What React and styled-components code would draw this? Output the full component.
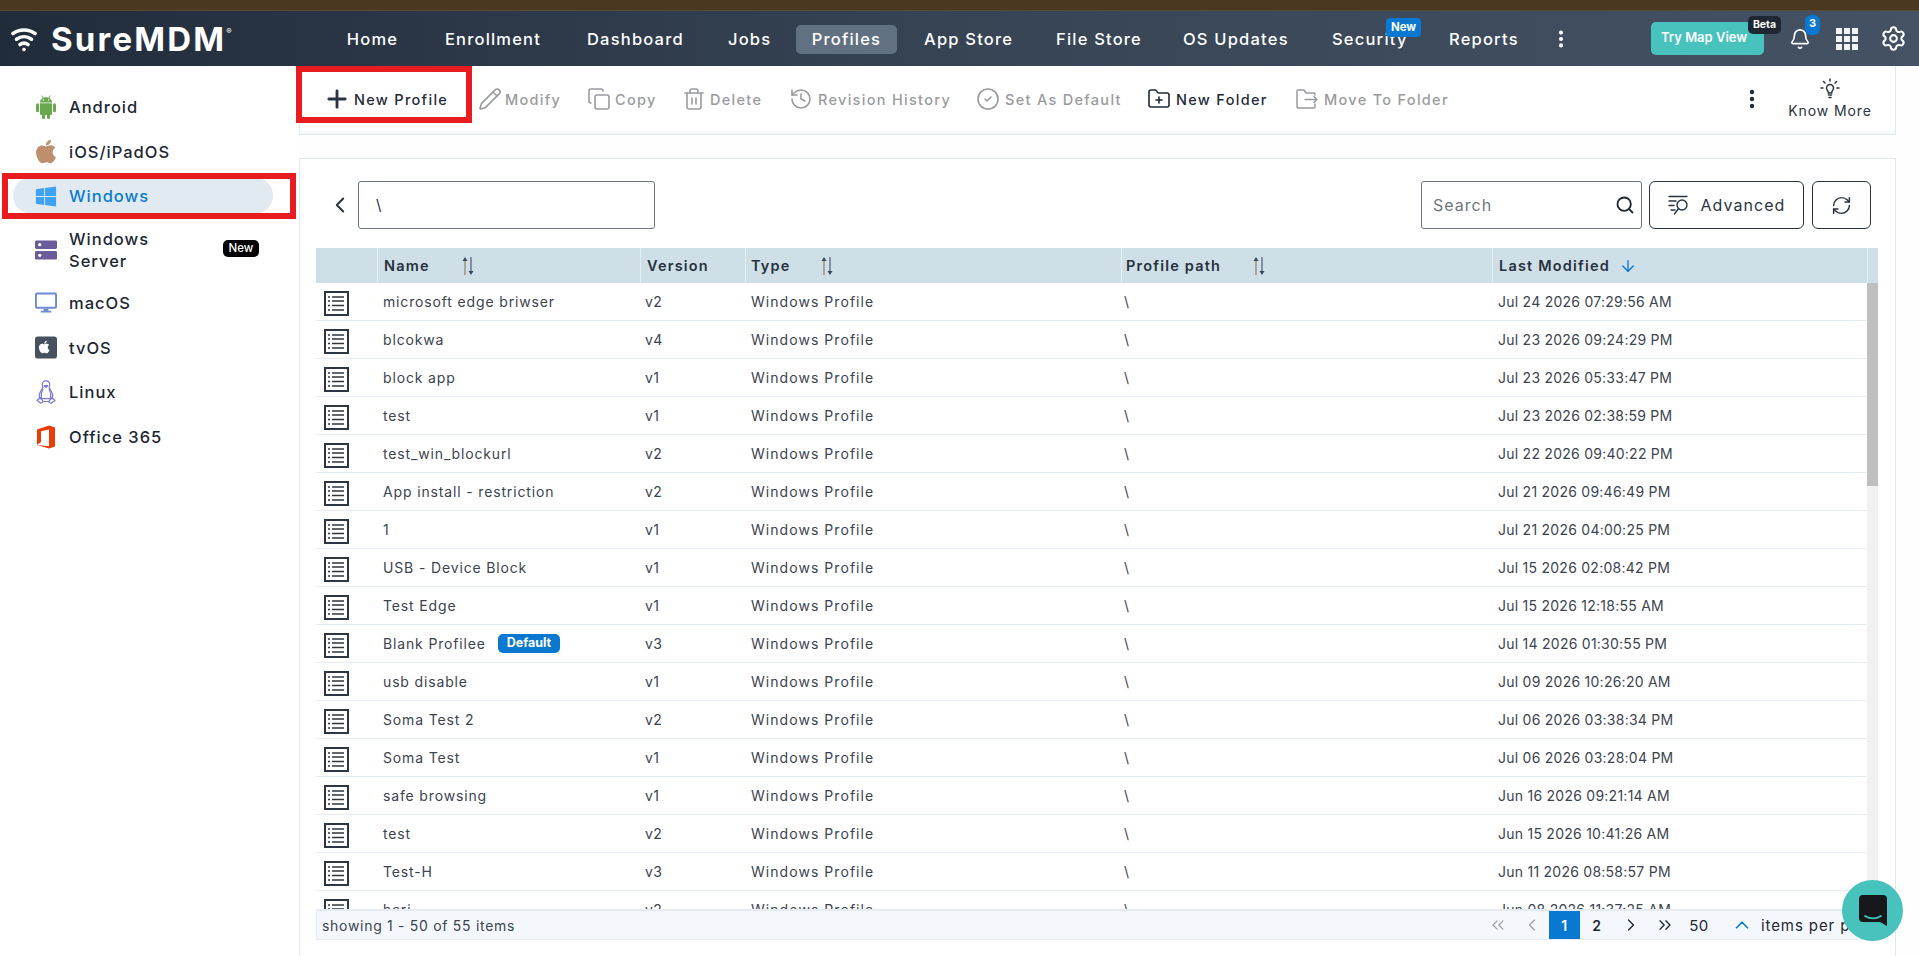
import React from 'react';
import styled, { createGlobalStyle } from 'styled-components';
import { FaApple, FaWindows } from 'react-icons/fa';
import {
  Plus, Pencil, Copy, Trash2, History, CircleCheck, FolderPlus,
  EllipsisVertical, ChevronLeft, ChevronRight, ChevronUp, ChevronsLeft, ChevronsRight,
  Search, RefreshCw, Bell, Settings, ArrowDown
} from 'lucide-react';

const FONT = 'Inter, "Noto Sans", sans-serif';

const rows = [
  ['microsoft edge briwser', 'v2', 'Jul 24 2026 07:29:56 AM'],
  ['blcokwa', 'v4', 'Jul 23 2026 09:24:29 PM'],
  ['block app', 'v1', 'Jul 23 2026 05:33:47 PM'],
  ['test', 'v1', 'Jul 23 2026 02:38:59 PM'],
  ['test_win_blockurl', 'v2', 'Jul 22 2026 09:40:22 PM'],
  ['App install - restriction', 'v2', 'Jul 21 2026 09:46:49 PM'],
  ['1', 'v1', 'Jul 21 2026 04:00:25 PM'],
  ['USB - Device Block', 'v1', 'Jul 15 2026 02:08:42 PM'],
  ['Test Edge', 'v1', 'Jul 15 2026 12:18:55 AM'],
  ['Blank Profilee', 'v3', 'Jul 14 2026 01:30:55 PM', true],
  ['usb disable', 'v1', 'Jul 09 2026 10:26:20 AM'],
  ['Soma Test 2', 'v2', 'Jul 06 2026 03:38:34 PM'],
  ['Soma Test', 'v1', 'Jul 06 2026 03:28:04 PM'],
  ['safe browsing', 'v1', 'Jun 16 2026 09:21:14 AM'],
  ['test', 'v2', 'Jun 15 2026 10:41:26 AM'],
  ['Test-H', 'v3', 'Jun 11 2026 08:58:57 PM'],
  ['hari', 'v2', 'Jun 08 2026 11:37:25 AM']
];

const navItems = [
  ['Home', 53], ['Enrollment', 98], ['Dashboard', 96], ['Jobs', 42], ['Profiles', 101],
  ['App Store', 87], ['File Store', 82], ['OS Updates', 104], ['Security', 72], ['Reports', 69]
];

const GlobalStyle = createGlobalStyle`
  html, body { margin: 0; padding: 0; height: 100%; overflow: hidden; background: #fff; }
  body { font-family: ${FONT}; color: #1f2a37; }
  * { box-sizing: border-box; }
`;

const Page = styled.div`
  display: flex;
  flex-direction: column;
  height: 956px;
  overflow: hidden;
`;

const BrownStrip = styled.div`
  height: 11px;
  background: #4b3820;
  border-bottom: 1px solid #5a4a34;
  flex: none;
`;

const Header = styled.header`
  flex: none;
  height: 55px;
  display: flex;
  align-items: center;
  background: linear-gradient(90deg, #212c3b 0%, #374454 50%, #445264 100%);
  color: #fff;
  position: relative;
`;

const Logo = styled.div`
  width: 346px;
  padding-left: 11px;
  display: flex;
  align-items: center;
  gap: 14px;
  font-size: 33px;
  font-weight: 700;
  letter-spacing: 2.2px;
  flex: none;
  sup { font-size: 8px; margin: -16px 0 0 0; letter-spacing: 0; font-weight: 500; }
`;

const LogoText = styled.div`
  display: flex;
  align-items: center;
`;

const Nav = styled.nav`
  display: flex;
  align-items: center;
  margin-top: 1px;
`;

const NavItem = styled.div`
  position: relative;
  width: ${p => p.$w}px;
  margin-right: ${p => p.$gap}px;
  height: 29px;
  line-height: 29px;
  text-align: center;
  font-size: 16.5px;
  font-weight: 500;
  letter-spacing: 1.2px;
  white-space: nowrap;
  border-radius: 5px;
  background: ${p => (p.$active ? '#617182' : 'transparent')};
`;

const NewTag = styled.span`
  position: absolute;
  top: -7px;
  left: 54px;
  width: 35px;
  height: 19px;
  line-height: 18px;
  border-radius: 4px;
  background: #0878d0;
  color: #fff;
  font-size: 11.5px;
  font-weight: 700;
  letter-spacing: 0;
`;

const HeaderRight = styled.div`
  position: absolute;
  left: 1552px;
  right: 0;
  top: 0;
  bottom: 0;
  display: flex;
  align-items: center;
`;

const MapButton = styled.div`
  position: relative;
  width: 113px;
  height: 33px;
  margin: -1px 0 0 79px;
  border-radius: 5px;
  background: #48c2bd;
  color: #fff;
  font-size: 13px;
  font-weight: 600;
  padding-left: 10px;
  line-height: 31px;
`;

const BetaTag = styled.span`
  position: absolute;
  top: -6px;
  right: -17px;
  width: 33px;
  height: 18px;
  line-height: 18px;
  border-radius: 5px;
  background: #1e2732;
  font-size: 10.5px;
  font-weight: 700;
  text-align: center;
`;

const BellBox = styled.div`
  position: relative;
  margin-left: 25px;
  width: 22px;
  height: 26px;
  display: flex;
  align-items: center;
  justify-content: center;
`;

const BellCount = styled.span`
  position: absolute;
  top: -11px;
  right: -9px;
  width: 15px;
  height: 20px;
  border-radius: 6px;
  background: #0878d0;
  font-size: 11px;
  font-weight: 700;
  text-align: center;
  line-height: 17px;
`;

const AppsGrid = styled.div`
  margin-left: 25px;
  width: 22px;
  height: 22px;
  display: grid;
  grid-template-columns: repeat(3, 6px);
  grid-auto-rows: 6px;
  gap: 2px;
  i { background: #f1f3f5; display: block; }
`;

const GearBox = styled.div`
  margin-left: 22px;
  display: flex;
`;

const Body = styled.div`
  flex: 1;
  display: flex;
  min-height: 0;
  background: #fefefe;
`;

const Sidebar = styled.aside`
  position: relative;
  width: 299px;
  flex: none;
  background: #fff;
  padding-top: 22px;
`;

const SideItem = styled.div`
  display: flex;
  align-items: center;
  height: ${p => (p.$tall ? 55 : 37)}px;
  margin: 0 26px 7.5px 13px;
  padding: 1px 0 0 22px;
  border-radius: 19px;
  background: ${p => (p.$active ? '#e1e9f1' : 'transparent')};
  color: ${p => (p.$active ? '#0a7bd2' : '#1d2733')};
  font-size: 16.5px;
  font-weight: 500;
  letter-spacing: 1px;
  line-height: 22px;
  position: relative;
`;

const SideIcon = styled.span`
  width: 22px;
  height: 24px;
  margin-right: 12px;
  display: flex;
  align-items: center;
  justify-content: center;
  flex: none;
`;

const SideLabel = styled.span`
  width: ${p => (p.$tall ? '96px' : 'auto')};
`;

const ServerTag = styled.span`
  position: absolute;
  left: 210px;
  top: 18px;
  width: 36px;
  height: 17px;
  line-height: 16px;
  text-align: center;
  border-radius: 5px;
  background: #000;
  color: #fff;
  font-size: 11.5px;
  letter-spacing: 0;
`;

const RedBox = styled.div`
  position: absolute;
  border: 6px solid #e81c1e;
  pointer-events: none;
  z-index: 5;
`;

const SideMark = styled(RedBox)`
  left: 2px;
  top: 107px;
  width: 294px;
  height: 46px;
`;

const ToolMark = styled(RedBox)`
  left: -4px;
  top: 0;
  width: 176px;
  height: 57px;
`;

const Main = styled.main`
  flex: 1;
  min-width: 0;
  display: flex;
  flex-direction: column;
  position: relative;
  padding-right: 23px;
`;

const Toolbar = styled.div`
  position: relative;
  height: 69px;
  background: #fff;
  border: 1px solid #e0e8f0;
  border-top: 0;
  box-shadow: inset 0 -5px 6px -5px #e8edf3;
  flex: none;
`;

const ToolItem = styled.div`
  position: absolute;
  left: ${p => p.$x}px;
  top: 21px;
  display: flex;
  align-items: center;
  height: 24px;
  color: ${p => (p.$on ? '#1f2a37' : '#999b9e')};
  font-size: 14.5px;
  font-weight: 500;
  letter-spacing: 1.3px;
  white-space: nowrap;
  svg { position: absolute; left: ${p => p.$ix}px; }
`;

const KnowMore = styled.div`
  position: absolute;
  left: 1487px;
  top: 12px;
  width: 86px;
  text-align: center;
  font-size: 14px;
  letter-spacing: .9px;
  color: #2a3441;
  svg { display: block; margin: 0 auto 3px; }
`;

const Card = styled.section`
  flex: 1;
  min-height: 0;
  margin-top: 23px;
  background: #fff;
  border: 1px solid #e0e8f0;
  border-bottom: 0;
  padding: 0 17px 16px 16px;
  display: flex;
  flex-direction: column;
`;

const FilterRow = styled.div`
  height: 89px;
  padding-top: 22px;
  display: flex;
  align-items: flex-start;
  flex: none;
  padding-right: 7px;
`;

const BackBtn = styled.div`
  width: 42px;
  height: 48px;
  display: flex;
  align-items: center;
  justify-content: flex-end;
  padding-right: 5px;
  color: #2a3441;
`;

const PathBox = styled.div`
  width: 297px;
  height: 48px;
  border: 1px solid #6c7680;
  border-radius: 3px;
  padding-left: 17px;
  line-height: 46px;
  font-size: 15px;
  color: #2a3441;
`;

const SearchBox = styled.div`
  margin-left: auto;
  width: 221px;
  height: 48px;
  border: 1px solid #6c7680;
  border-radius: 3px;
  padding: 0 6px 0 11px;
  display: flex;
  align-items: center;
  justify-content: space-between;
  color: #6f7780;
  font-size: 16px;
  letter-spacing: 1px;
  svg { color: #1d2733; }
`;

const OutlineBtn = styled.div`
  width: ${p => p.$w}px;
  height: 48px;
  margin-left: ${p => p.$ml}px;
  border: 1px solid #2a3441;
  border-radius: 6px;
  display: flex;
  align-items: center;
  justify-content: center;
  gap: 11px;
  font-size: 16px;
  letter-spacing: 1.05px;
  color: #2a3441;
`;

const HeadRow = styled.div`
  display: grid;
  grid-template-columns: 61px 263px 105px 376px 371px 375px 11px;
  height: 35px;
  background: #cfdfe8;
  flex: none;
`;

const HeadCell = styled.div`
  display: flex;
  align-items: center;
  padding-left: ${p => p.$pad || 6}px;
  border-left: ${p => (p.$first ? '0' : '1px solid #e6eef3')};
  font-size: 14.5px;
  font-weight: 600;
  letter-spacing: 1.2px;
  color: #27313d;
  white-space: nowrap;
`;

const SortWrap = styled.span`
  display: flex;
  margin-left: ${p => p.$ml}px;
`;

const TableBody = styled.div`
  flex: 1;
  min-height: 0;
  display: flex;
`;

const RowList = styled.div`
  flex: 1;
  min-width: 0;
  overflow: hidden;
`;

const ScrollRail = styled.div`
  width: 11px;
  flex: none;
  background: #f1f1f1;
`;

const ScrollThumb = styled.div`
  height: 203px;
  background: #bfbfbf;
`;

const Row = styled.div`
  display: grid;
  grid-template-columns: 61px 263px 105px 376px 371px 375px;
  height: 38px;
  border-bottom: 1.5px solid #e4ebf2;
  align-items: center;
  font-size: 14px;
  color: #3b444f;
  white-space: nowrap;
`;

const IconCell = styled.div`
  padding: 3px 0 0 8px;
  display: flex;
`;

const Cell = styled.div`
  padding-left: ${p => p.$pad}px;
  display: flex;
  align-items: center;
  letter-spacing: ${p => p.$ls}px;
`;

const DefaultTag = styled.span`
  margin-left: 12px;
  width: 62px;
  height: 19px;
  line-height: 18px;
  border-radius: 5px;
  background: #0878d0;
  color: #fff;
  font-size: 12.5px;
  font-weight: 700;
  letter-spacing: 0;
  text-align: center;
`;

const Footer = styled.div`
  flex: none;
  height: 31px;
  background: #f4f8fc;
  border: 1px solid #e4ebf2;
  border-top: 2px solid #e4ebf2;
  display: flex;
  align-items: center;
  justify-content: space-between;
  padding-left: 5px;
  font-size: 14px;
  letter-spacing: .7px;
  color: #3b444f;
  overflow: hidden;
  white-space: nowrap;
`;

const Pager = styled.div`
  display: flex;
  align-items: center;
  height: 100%;
  width: 396px;
  flex: none;
  svg { flex: none; }
`;

const PageBtn = styled.div`
  width: ${p => p.$w || 34}px;
  height: 29px;
  display: flex;
  align-items: center;
  justify-content: center;
  flex: none;
  color: ${p => (p.$muted ? '#9a9da1' : '#1d2733')};
  background: ${p => (p.$active ? '#0878d0' : 'transparent')};
  font-size: 14px;
  font-weight: 600;
  ${p => p.$active && 'color: #fff;'}
`;

const PerPage = styled.span`
  margin-left: 8px;
  font-size: 15px;
  letter-spacing: .9px;
  color: #1d2733;
`;

const PageSize = styled.span`
  width: 34px;
  margin-right: 15px;
  text-align: center;
  font-size: 15px;
  letter-spacing: .5px;
  color: #1d2733;
  flex: none;
`;

const ChatBubble = styled.div`
  position: absolute;
  right: 16px;
  bottom: 15px;
  width: 61px;
  height: 61px;
  border-radius: 50%;
  background: #48c2bd;
  display: flex;
  align-items: center;
  justify-content: center;
  z-index: 6;
`;

const WifiLogo = () => (
  <svg width="26" height="26" viewBox="0 0 26 26" fill="none" stroke="#fff" strokeWidth="3.6" strokeLinecap="round">
    <path d="M2 7.500C8.500 2.800 17.500 2.800 24 7.500" />
    <path d="M5.500 13.200C10 10 16 10 20.500 13.200" />
    <path d="M9 18.500c2.500-1.700 5.500-1.700 8 0" />
    <circle cx="13" cy="23.500" r="1.400" fill="#fff" strokeWidth="1" />
  </svg>
);

const ListIcon = () => (
  <svg width="25" height="25" viewBox="0 0 25 25" fill="none" stroke="#2d3743">
    <rect x="1" y="1" width="23" height="23" strokeWidth="2" />
    <path d="M8 6h12M8 10h12M8 14.500h12M8 19h12" strokeWidth="1.600" />
    <path d="M4 6h2M4 10h2M4 14.500h2M4 19h2" strokeWidth="1.600" />
  </svg>
);

const SortIcon = () => (
  <svg width="14" height="20" viewBox="0 0 14 20">
    <path d="M4 19V3" stroke="#8a7f6c" strokeWidth="1.200" />
    <path d="M1.500 5L4 1l2.500 4z" fill="#38495a" />
    <path d="M10 1v16" stroke="#4b5d70" strokeWidth="1.200" />
    <path d="M7.500 15l2.500 4 2.500-4z" fill="#38495a" />
  </svg>
);

const AndroidIcon = () => (
  <svg width="20" height="24" viewBox="0 0 20 24" fill="#6aa84f">
    <path d="M4 7.500C4 4.200 6.700 2.200 10 2.200s6 2 6 5.300z" />
    <path d="M5.500 .5l1.800 2.800M14.500 .5l-1.800 2.800" stroke="#6aa84f" strokeWidth=".9" />
    <circle cx="7.400" cy="5" r=".7" fill="#fff" />
    <circle cx="12.600" cy="5" r=".7" fill="#fff" />
    <path d="M4 8.300h12v10.400a1.300 1.300 0 0 1-1.300 1.300H5.300A1.300 1.300 0 0 1 4 18.700z" />
    <rect x="0" y="8.300" width="3" height="9" rx="1.500" />
    <rect x="17" y="8.300" width="3" height="9" rx="1.500" />
    <rect x="6" y="18" width="3" height="6" rx="1.500" />
    <rect x="11" y="18" width="3" height="6" rx="1.500" />
  </svg>
);

const ServerIcon = () => (
  <svg width="23" height="20" viewBox="0 0 23 20">
    <rect width="23" height="9" y="0" rx="1.500" fill="#6b5b9a" />
    <rect width="23" height="9" y="11" rx="1.500" fill="#6b5b9a" />
    <circle cx="5" cy="4.500" r="1.700" fill="#fff" />
    <circle cx="5" cy="15.500" r="1.700" fill="#fff" />
  </svg>
);

const MonitorIcon = () => (
  <svg width="23" height="22" viewBox="0 0 23 22">
    <rect x="1" y="1" width="21" height="15" rx="1" fill="#fff" stroke="#6d8bd0" strokeWidth="2" />
    <path d="M9 17h5v2h3v2H6v-2h3z" fill="#6d8bd0" />
  </svg>
);

const TvIcon = () => (
  <svg width="23" height="23" viewBox="0 0 23 23">
    <rect width="23" height="23" rx="3" fill="#47525e" />
    <g transform="translate(4 3.500) scale(0.0293)">
      <path fill="#fff" d="M318.700 268.700c-.2-36.700 16.400-64.400 50-84.800-18.800-26.900-47.200-41.700-84.700-44.600-35.500-2.800-74.300 20.700-88.500 20.700-15 0-49.400-19.700-76.400-19.700C63.300 141.200 4 184.800 4 273.500q0 39.300 14.400 81.200c12.800 36.700 59 126.700 107.200 125.200 25.200-.6 43-17.900 75.800-17.900 31.800 0 48.300 17.900 76.400 17.900 48.600-.7 90.400-82.500 102.600-119.300-65.200-30.700-61.700-90-61.700-91.900zm-56.600-164.200c27.300-32.400 24.800-61.900 24-72.500-24.100 1.400-52 16.400-67.900 34.900-17.500 19.800-27.800 44.300-25.600 71.900 26.100 2 49.900-11.400 69.500-34.300z" />
    </g>
  </svg>
);

const PenguinIcon = () => (
  <svg width="20" height="24" viewBox="0 0 20 24" fill="none" stroke="#7b78cf" strokeWidth="1.200" strokeLinejoin="round">
    <path d="M7 7.500C6.400 6.800 6.300 5.800 6.300 4.800 6.300 2.400 7.800 .8 10 .8s3.700 1.600 3.700 4c0 1 -.1 2 -.7 2.700 1.500 2.300 3.600 5 3.700 8.300 0 1 -.2 2 -.7 2.900H4c-.5-.9-.7-1.900-.7-2.900C3.400 12.500 5.500 9.800 7 7.500z" />
    <path d="M7 9c-.9 2.300-1.800 4.200-1.800 6.500 0 1 .2 2 .6 2.800M13 9c.9 2.300 1.800 4.200 1.800 6.500 0 1-.2 2-.6 2.800" />
    <path d="M1 20.500l3.300-3 3 4.200-2.300 1.500zM19 20.500l-3.300-3-3 4.200 2.300 1.500zM7.300 21.500h5.400" />
    <path d="M8.300 5.700L10 7.300l1.700-1.600z" fill="#7b78cf" />
  </svg>
);

const OfficeIcon = () => (
  <svg width="20" height="24" viewBox="0 0 20 24">
    <path fill="#e93c06" d="M1 4.500L13 .5l6 2v19l-6 2-12-3.500 12 1.300V4.500L5 6.200V17l-4 3z" />
  </svg>
);

const FilterSearchIcon = () => (
  <svg width="22" height="20" viewBox="0 0 22 20" fill="none" stroke="#2a3441" strokeWidth="1.400" strokeLinecap="round">
    <path d="M1 1.500h18M1 6h7M1 10.500h5M3 15h4" />
    <circle cx="14" cy="10" r="5" />
    <path d="M10.500 13.500L6.500 19" />
  </svg>
);

const MoveFolderIcon = ({ size }) => (
  <svg width={size} height={size} viewBox="0 0 24 24" fill="none" stroke="currentColor" strokeWidth="1.500" strokeLinejoin="round" strokeLinecap="round">
    <path d="M20 8V7a1 1 0 0 0-1-1h-8L9 3H3a1 1 0 0 0-1 1v16a1 1 0 0 0 1 1h16a1 1 0 0 0 1-1v-3" />
    <path d="M10 12.500h12M19 9.500l3 3-3 3" />
  </svg>
);

const BulbIcon = () => (
  <svg width="22" height="21" viewBox="0 0 22 21" fill="none" stroke="#2a3441" strokeWidth="1.500" strokeLinecap="round">
    <path d="M7.500 10a3.500 3.500 0 1 1 7 0c0 1.600-1 2.300-1.500 3.500-.2.500-.3 1-.3 1.500H9.300c0-.5-.1-1-.3-1.500-.5-1.200-1.500-1.900-1.500-3.500z" />
    <path d="M9.500 17h3M10 19.500h2M11 1v2M4.500 3.500L6 5M17.500 3.500L16 5M2 10h2M18 10h2" />
  </svg>
);

const ChatIcon = () => (
  <svg width="28" height="31" viewBox="0 0 28 31">
    <path fill="#17181c" d="M4 0h20a4 4 0 0 1 4 4v27l-7-4H4a4 4 0 0 1-4-4V4a4 4 0 0 1 4-4z" />
    <path d="M6 21c5 3 11 3 16 0" fill="none" stroke="#48c2bd" strokeWidth="1.800" strokeLinecap="round" />
  </svg>
);

const toolItems = [
  ['Modify', Pencil, 205, -27, false],
  ['Copy', Copy, 315, -28, false],
  ['Delete', Trash2, 410, -28, false],
  ['Revision History', History, 518, -29, false],
  ['Set As Default', CircleCheck, 705, -29, false],
  ['New Folder', FolderPlus, 876, -29, true],
  ['Move To Folder', MoveFolderIcon, 1024, -29, false]
];

const sideItems = [
  ['Android', <AndroidIcon />],
  ['iOS/iPadOS', <FaApple size={27} color="#bd8f6c" />],
  ['Windows', <FaWindows size={23} color="#3ea2f5" />, true],
  ['Windows Server', <ServerIcon />, false, true],
  ['macOS', <MonitorIcon />],
  ['tvOS', <TvIcon />],
  ['Linux', <PenguinIcon />],
  ['Office 365', <OfficeIcon />]
];

export default function App() {
  return (
    <Page>
      <GlobalStyle />
      <BrownStrip />
      <Header>
        <Logo>
          <WifiLogo />
          <LogoText>SureMDM<sup>®</sup></LogoText>
        </Logo>
        <Nav>
          {navItems.map(([label, w]) => (
            <NavItem key={label} $w={w} $gap={label === 'Profiles' ? 27 : label === 'Jobs' ? 26 : 45} $active={label === 'Profiles'}>
              {label}
              {label === 'Security' && <NewTag>New</NewTag>}
            </NavItem>
          ))}
        </Nav>
        <HeaderRight>
          <EllipsisVertical size={22} strokeWidth={2.5} style={{ marginLeft: -2 }} />
          <MapButton>Try Map View<BetaTag>Beta</BetaTag></MapButton>
          <BellBox>
            <Bell size={22} strokeWidth={1.8} />
            <BellCount>3</BellCount>
          </BellBox>
          <AppsGrid>
            {Array.from({ length: 9 }, (_, i) => <i key={i} />)}
          </AppsGrid>
          <GearBox><Settings size={27} strokeWidth={1.8} /></GearBox>
        </HeaderRight>
      </Header>
      <Body>
        <Sidebar>
          {sideItems.map(([label, icon, active, tall]) => (
            <SideItem key={label} $active={active} $tall={tall}>
              <SideIcon>{icon}</SideIcon>
              <SideLabel $tall={tall}>{label}</SideLabel>
              {tall && <ServerTag>New</ServerTag>}
            </SideItem>
          ))}
          <SideMark />
        </Sidebar>
        <Main>
          <Toolbar>
            <ToolItem $x={54} $ix={-31} $on>
              <Plus size={28} strokeWidth={2.4} color="#2a3441" />
              New Profile
            </ToolItem>
            {toolItems.map(([label, Icon, x, ix, on]) => (
              <ToolItem key={label} $x={x} $ix={ix} $on={on}>
                <Icon size={24} strokeWidth={1.6} />
                {label}
              </ToolItem>
            ))}
            <ToolItem $x={1452} $ix={-12} $on>
              <EllipsisVertical size={24} strokeWidth={2.4} />
            </ToolItem>
            <KnowMore>
              <BulbIcon />
              Know More
            </KnowMore>
            <ToolMark />
          </Toolbar>
          <Card>
            <FilterRow>
              <BackBtn><ChevronLeft size={26} strokeWidth={1.8} /></BackBtn>
              <PathBox>\</PathBox>
              <SearchBox>
                Search
                <Search size={20} strokeWidth={2.2} />
              </SearchBox>
              <OutlineBtn $w={155} $ml={7}>
                <FilterSearchIcon />
                Advanced
              </OutlineBtn>
              <OutlineBtn $w={59} $ml={8}>
                <RefreshCw size={21} strokeWidth={1.7} />
              </OutlineBtn>
            </FilterRow>
            <HeadRow>
              <HeadCell $first />
              <HeadCell>Name<SortWrap $ml={31}><SortIcon /></SortWrap></HeadCell>
              <HeadCell>Version</HeadCell>
              <HeadCell $pad={5}>Type<SortWrap $ml={29}><SortIcon /></SortWrap></HeadCell>
              <HeadCell $pad={4}>Profile path<SortWrap $ml={31}><SortIcon /></SortWrap></HeadCell>
              <HeadCell>Last Modified<SortWrap $ml={9}><ArrowDown size={18} color="#0878d0" strokeWidth={1.8} /></SortWrap></HeadCell>
              <HeadCell />
            </HeadRow>
            <TableBody>
              <RowList>
                {rows.map(([name, version, modified, isDefault], i) => (
                  <Row key={i}>
                    <IconCell><ListIcon /></IconCell>
                    <Cell $pad={6} $ls={0.85}>
                      {name}
                      {isDefault && <DefaultTag>Default</DefaultTag>}
                    </Cell>
                    <Cell $pad={5} $ls={0.4}>{version}</Cell>
                    <Cell $pad={6} $ls={1.05}>Windows Profile</Cell>
                    <Cell $pad={3} $ls={0}>\</Cell>
                    <Cell $pad={6} $ls={0.25}>{modified}</Cell>
                  </Row>
                ))}
              </RowList>
              <ScrollRail><ScrollThumb /></ScrollRail>
            </TableBody>
            <Footer>
              showing 1 - 50 of 55 items
              <Pager>
                <PageBtn $muted><ChevronsLeft size={20} strokeWidth={1.4} /></PageBtn>
                <PageBtn $muted><ChevronLeft size={20} strokeWidth={1.4} /></PageBtn>
                <PageBtn $active $w={31}>1</PageBtn>
                <PageBtn>2</PageBtn>
                <PageBtn><ChevronRight size={20} strokeWidth={1.6} /></PageBtn>
                <PageBtn><ChevronsRight size={20} strokeWidth={1.6} /></PageBtn>
                <PageSize>50</PageSize>
                <ChevronUp size={22} color="#0878d0" strokeWidth={1.8} />
                <PerPage>items per page</PerPage>
              </Pager>
            </Footer>
          </Card>
          <ChatBubble><ChatIcon /></ChatBubble>
        </Main>
      </Body>
    </Page>
  );
}
